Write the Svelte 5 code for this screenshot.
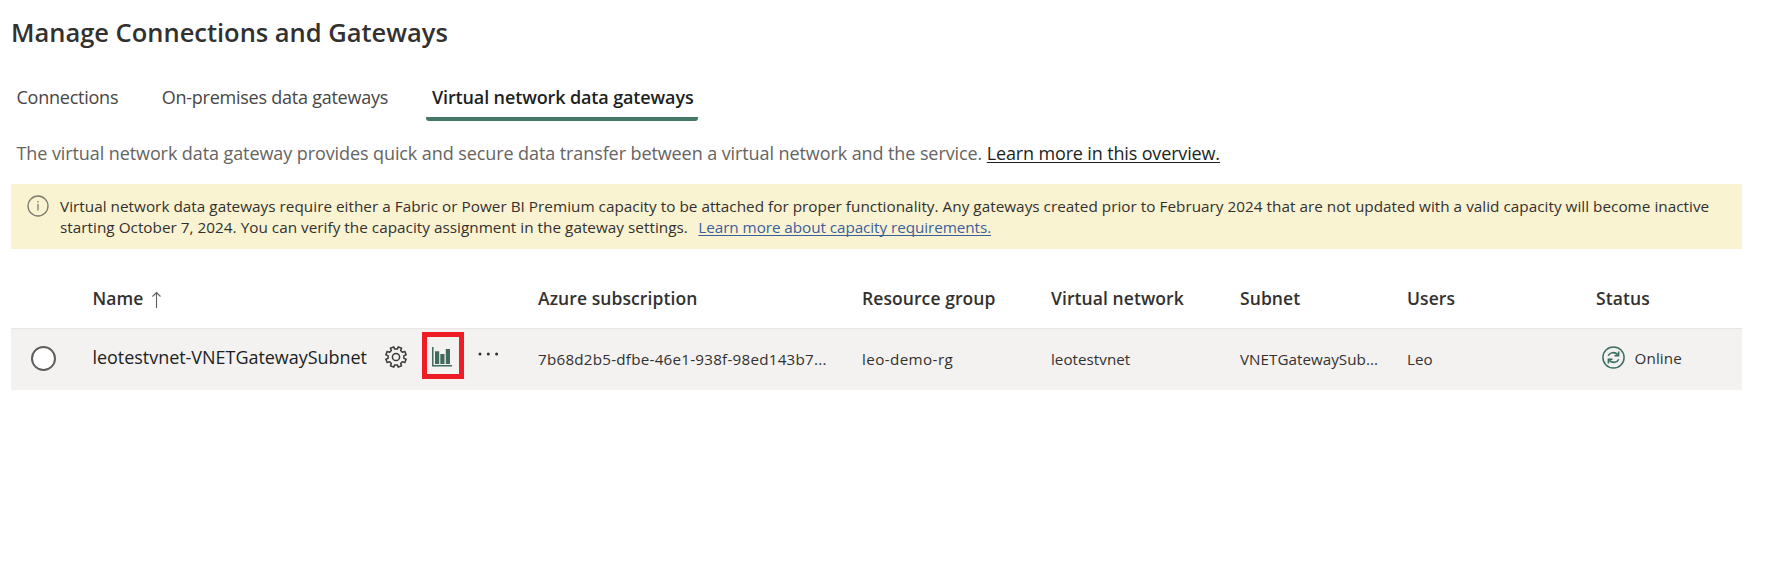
<script>
  const columns = ['Azure subscription', 'Resource group', 'Virtual network', 'Subnet', 'Users', 'Status'];
  const cells = [
    { text: '7b68d2b5-dfbe-46e1-938f-98ed143b7...', spacing: 0.24 },
    { text: 'leo-demo-rg', spacing: 0.4 },
    { text: 'leotestvnet', spacing: 0.03 },
    { text: 'VNETGatewaySub...', spacing: 0.03 },
    { text: 'Leo', spacing: 0 },
  ];

  const polar = (r, deg) => {
    const a = (deg * Math.PI) / 180;
    return `${(11 + r * Math.cos(a)).toFixed(2)} ${(11 + r * Math.sin(a)).toFixed(2)}`;
  };
  const gear =
    'M' +
    Array.from({ length: 8 }, (_, i) => {
      const c = 22.5 + i * 45;
      return [polar(8, c - 13), polar(10.4, c - 10), polar(10.4, c + 10), polar(8, c + 13)].join('L');
    }).join('L') +
    'Z';
</script>

<main>
  <h1>Manage Connections and Gateways</h1>
  <nav>
    <span class="tab">Connections</span>
    <span class="tab">On-premises data gateways</span>
    <span class="tab active">Virtual network data gateways</span>
  </nav>
  <p class="desc">
    The virtual network data gateway provides quick and secure data transfer between a virtual network and the service. <span class="link">Learn more in this overview.</span>
  </p>
  <section class="banner">
    <svg width="22" height="22" viewBox="0 0 22 22">
      <circle cx="11" cy="11" r="10" fill="none" stroke="#7b7a6e" stroke-width="1.3" />
      <path d="M11 9v6.6M11 6v1.6" stroke="#7b7a6e" stroke-width="1.3" />
    </svg>
    <p>
      Virtual network data gateways require either a Fabric or Power BI Premium capacity to be attached for proper functionality. Any gateways created prior to February 2024 that are not updated with a valid capacity will become inactive<br />starting October 7, 2024. You can verify the capacity assignment in the gateway settings.<span class="link">Learn more about capacity requirements.</span>
    </p>
  </section>
  <div class="grid head">
    <span></span>
    <span class="sorted">
      Name
      <svg width="11" height="18" viewBox="0 0 11 18" fill="none" stroke="#605e5c" stroke-width="1.1">
        <path d="M5.5 17V1.5M1.5 5.5l4-4 4 4" />
      </svg>
    </span>
    {#each columns as column}<span>{column}</span>{/each}
  </div>
  <div class="grid row">
    <span class="radio"></span>
    <div class="name">
      <span class="label">leotestvnet-VNETGatewaySubnet</span>
      <svg class="gear" width="22" height="22" viewBox="0 0 22 22" fill="none" stroke="#3b3a39" stroke-width="1.5" stroke-linejoin="round">
        <path d={gear} />
        <circle cx="11" cy="11" r="3.6" />
      </svg>
      <span class="highlight">
        <svg width="20" height="20" viewBox="0 0 20 20">
          <path fill="#41695d" d="M0 0h1.5v18H20v1.6H0zM3 4.3h4.2V17H3zM8.3 7h4.2v10H8.3zM13.8 2H18v15h-4.2z" />
        </svg>
      </span>
      <svg class="dots" width="21" height="4" viewBox="0 0 21 4" fill="#323130">
        <circle cx="2" cy="2" r="1.5" /><circle cx="10.3" cy="2" r="1.5" /><circle cx="18.6" cy="2" r="1.5" />
      </svg>
    </div>
    {#each cells as cell}
      <span class="cell" style="letter-spacing: {cell.spacing}px">{cell.text}</span>
    {/each}
    <div class="status">
      <svg width="23" height="23" viewBox="0 0 23 23" fill="none" stroke="#3d6e63">
        <circle cx="11.5" cy="11.5" r="10.6" stroke-width="1.5" />
        <path stroke-width="1.6" d="M6.2 9.8C7.6 6.3 12.6 5.5 15.6 8.6M16.8 13.2C15.4 16.7 10.4 17.5 7.4 14.4M16.6 5.6V9.7H12.5M6.4 17.4V13.3H10.5" />
      </svg>
      <span>Online</span>
    </div>
  </div>
</main>

<style>
  :global(body) { margin: 0; background: #fff; }
  main { font-family: 'Open Sans', 'Noto Sans', sans-serif; color: #323130; padding: 12px 26px 0 11px; }
  h1 { margin: 0 0 28px; font-size: 25.5px; line-height: 40px; font-weight: 600; letter-spacing: -0.02px; }
  nav { display: flex; font-size: 18px; line-height: 34px; letter-spacing: -0.24px; color: #484644; padding-left: 5.5px; gap: 43.4px; }
  .tab { padding-bottom: 7px; white-space: nowrap; }
  .active { box-sizing: border-box; width: 272px; margin-left: -5.5px; padding: 0 0 3px 6px; font-weight: 600; letter-spacing: -0.13px; color: #201f1e; border-bottom: 4px solid #467867; border-radius: 0 0 3px 3px; }
  .desc { margin: 18px 0 17px 5.5px; font-size: 18px; line-height: 28px; letter-spacing: -0.09px; color: #666462; white-space: nowrap; }
  .desc .link { color: #201f1e; letter-spacing: -0.15px; }
  .link { text-decoration: underline; text-decoration-thickness: 1px; text-underline-offset: 2px; text-decoration-skip-ink: none; }
  .banner { display: flex; box-sizing: border-box; height: 65px; padding: 11px 16px; gap: 11px; background: #faf3d1; font-size: 15.3px; line-height: 21px; letter-spacing: 0.018px; white-space: nowrap; }
  .banner svg { margin-top: -0.5px; }
  .banner p { margin: 1px 0 0; }
  .banner .link { margin-left: 10.5px; color: #3a5f9e; letter-spacing: -0.08px; }
  .grid { display: grid; grid-template-columns: 81px 446px 324px 189px 189px 167px 189px 1fr; }
  .head { padding: 34px 0 15px; font-size: 17.5px; font-weight: 600; line-height: 30px; letter-spacing: 0.08px; white-space: nowrap; }
  .sorted { display: flex; align-items: center; gap: 8px; padding-left: 0.5px; }
  .sorted svg { margin-top: 4px; }
  .row { height: 61px; border-top: 1px solid #e7e6e5; background: #f3f2f1; align-items: center; white-space: nowrap; }
  .radio { box-sizing: border-box; width: 25px; height: 25px; margin: 0 0 3px 20px; border: 2px solid #605e5c; border-radius: 50%; background: #fff; }
  .name { display: flex; align-items: center; height: 61px; padding: 0 0 6px 0.5px; box-sizing: border-box; }
  .label { width: 292.5px; font-size: 18px; line-height: 28px; letter-spacing: -0.04px; color: #201f1e; }
  .gear { margin-top: 1px; }
  .highlight { display: flex; box-sizing: border-box; width: 42px; height: 47px; margin: -3px 14px 0 15px; padding: 10px 0 0 5px; border: 5px solid #ee1c25; }
  .dots { margin-top: -5px; }
  .cell { padding-bottom: 2px; font-size: 15.2px; line-height: 24px; }
  .status { display: flex; align-items: center; gap: 9.5px; padding: 0 0 3px 6px; font-size: 15.2px; line-height: 24px; letter-spacing: 0.13px; }
  .status svg { margin-top: -2px; }
</style>
